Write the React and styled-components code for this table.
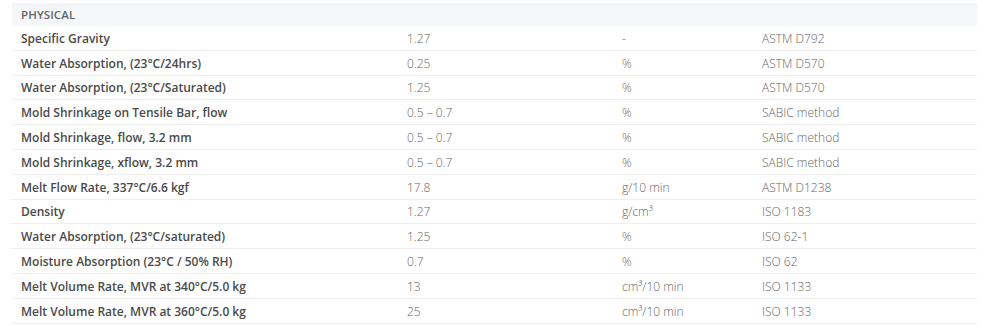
import React from 'react';
import styled, { createGlobalStyle } from 'styled-components';

const GlobalStyle = createGlobalStyle`
  html, body {
    margin: 0;
    padding: 0;
    background: #fff;
  }
  body {
    font-family: 'Open Sans', 'Liberation Sans', sans-serif;
  }
`;

const Wrapper = styled.div`
  padding: 3px 17px 0 12px;
`;

const Table = styled.div`
  display: grid;
  grid-template-columns: 386px 215px 140px 1fr;
  width: 965px;
`;

const HeaderRow = styled.div`
  grid-column: 1 / -1;
  height: 23px;
  background: #f5f6f7;
  display: flex;
  align-items: center;
  padding-left: 9px;
  font-size: 11.5px;
  font-weight: 600;
  color: #666;
  letter-spacing: 0.1px;
`;

const Row = styled.div`
  display: contents;
`;

const Cell = styled.div`
  box-sizing: border-box;
  height: 24.8px;
  padding: 1px 0 0 9px;
  display: flex;
  align-items: center;
  border-bottom: 1px solid #efefef;
  font-size: 12px;
  white-space: nowrap;
  color: ${(p) => (p.$label ? '#4a4a4a' : '#666')};
  font-weight: ${(p) => (p.$label ? 600 : 300)};
`;

const rows = [
  ['Specific Gravity', '1.27', '-', 'ASTM D792'],
  ['Water Absorption, (23°C/24hrs)', '0.25', '%', 'ASTM D570'],
  ['Water Absorption, (23°C/Saturated)', '1.25', '%', 'ASTM D570'],
  ['Mold Shrinkage on Tensile Bar, flow', '0.5 – 0.7', '%', 'SABIC method'],
  ['Mold Shrinkage, flow, 3.2 mm', '0.5 – 0.7', '%', 'SABIC method'],
  ['Mold Shrinkage, xflow, 3.2 mm', '0.5 – 0.7', '%', 'SABIC method'],
  ['Melt Flow Rate, 337°C/6.6 kgf', '17.8', 'g/10 min', 'ASTM D1238'],
  ['Density', '1.27', 'g/cm³', 'ISO 1183'],
  ['Water Absorption, (23°C/saturated)', '1.25', '%', 'ISO 62-1'],
  ['Moisture Absorption (23°C / 50% RH)', '0.7', '%', 'ISO 62'],
  ['Melt Volume Rate, MVR at 340°C/5.0 kg', '13', 'cm³/10 min', 'ISO 1133'],
  ['Melt Volume Rate, MVR at 360°C/5.0 kg', '25', 'cm³/10 min', 'ISO 1133'],
];

const App = () => {
  return (
    <Wrapper>
      <GlobalStyle />
      <Table>
        <HeaderRow>PHYSICAL</HeaderRow>
        {rows.map((r) => (
          <Row key={r[0]}>
            <Cell $label>{r[0]}</Cell>
            <Cell>{r[1]}</Cell>
            <Cell>{r[2]}</Cell>
            <Cell>{r[3]}</Cell>
          </Row>
        ))}
      </Table>
    </Wrapper>
  );
};

export default App;
